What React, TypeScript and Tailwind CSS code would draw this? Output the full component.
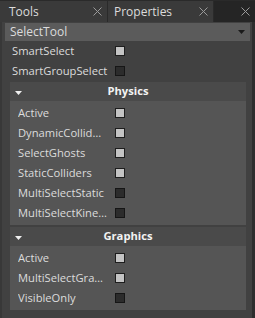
import React from "react";

function Check({ on }: { on: boolean }) {
  return (
    <div
      className={
        "w-[10px] h-[10px] border " +
        (on ? "bg-[#c4c4c4] border-[#1e1e1e]" : "bg-[#2c2c2c] border-[#161616]")
      }
    />
  );
}

function Row({ label, on, indent }: { label: string; on: boolean; indent?: boolean }) {
  return (
    <div className={"h-[20px] flex items-center " + (indent ? "pl-[8px]" : "pl-[10px]")}>
      <div className={(indent ? "w-[89px] mr-[8px]" : "w-[103px]") + " truncate"}>{label}</div>
      <Check on={on} />
    </div>
  );
}

function Tri({ cls }: { cls: string }) {
  return (
    <svg width="7" height="4" viewBox="0 0 7 4" className={cls}>
      <path d="M0 0H7L3.5 4Z" fill="currentColor" />
    </svg>
  );
}

function Section({ title, rows }: { title: string; rows: [string, boolean][] }) {
  return (
    <div className="ml-[8px] w-[236px]">
      <div className="h-[19px] bg-[#4a4a4a] flex items-center relative">
        <Tri cls="absolute left-[5px] top-[9px] text-[#f0f0f0]" />
        <div className="w-full text-center font-bold text-[#f2f2f2]">{title}</div>
      </div>
      <div className="bg-[#555555] py-[2px]">
        {rows.map(([l, on]) => (
          <Row key={l} label={l} on={on} indent />
        ))}
      </div>
    </div>
  );
}

function Tab({ label, w, dark, pl }: { label: string; w: string; dark?: boolean; pl: string }) {
  return (
    <div
      className={
        w +
        " " +
        pl +
        " h-[21px] flex items-center justify-between pr-[5px] " +
        (dark ? "bg-[#252525]" : "bg-[#3a3a3a]")
      }
    >
      <span className="text-[12px]">{label}</span>
      <svg width="9" height="9" viewBox="0 0 9 9" className="text-[#9a9a9a]">
        <path d="M0.5 0.5L8.5 8.5M8.5 0.5L0.5 8.5" stroke="currentColor" strokeWidth="1" />
      </svg>
    </div>
  );
}

export default function App() {
  return (
    <div
      className="w-[255px] h-[318px] bg-[#2a2a2a] text-[#dcdcdc] text-[11.2px] overflow-hidden"
      style={{ fontFamily: '"Open Sans", "Noto Sans", sans-serif' }}
    >
      <div className="h-[22px] pt-[1px] flex gap-[1px] bg-[#2a2a2a]">
        <Tab label="Tools" w="w-[107px]" pl="pl-[9px]" />
        <Tab label="Properties" w="w-[105px]" pl="pl-[6px]" />
        <Tab label="" w="w-[41px]" pl="pl-[6px]" dark />
      </div>
      <div className="h-[296px] bg-[#414141] border-l-[2px] border-[#383838] flex">
        <div className="w-[250px] pt-[1px]">
          <div className="ml-[3px] w-[245px] h-[18px] bg-[#5b5b5b] flex items-center justify-between pl-[5px] pr-[5px] text-[12px]">
            <span>SelectTool</span>
            <Tri cls="text-[#1a1a1a]" />
          </div>
          <Row label="SmartSelect" on={true} />
          <Row label="SmartGroupSelect" on={false} />
          <div className="h-[1px]" />
          <Section
            title="Physics"
            rows={[
              ["Active", true],
              ["DynamicColliders", true],
              ["SelectGhosts", true],
              ["StaticColliders", true],
              ["MultiSelectStatic", false],
              ["MultiSelectKinematic", false],
            ]}
          />
          <div className="h-[2px]" />
          <Section
            title="Graphics"
            rows={[
              ["Active", true],
              ["MultiSelectGraphics", true],
              ["VisibleOnly", false],
            ]}
          />
        </div>
        <div className="w-[3px] bg-[#2e2e2e]" />
      </div>
    </div>
  );
}
